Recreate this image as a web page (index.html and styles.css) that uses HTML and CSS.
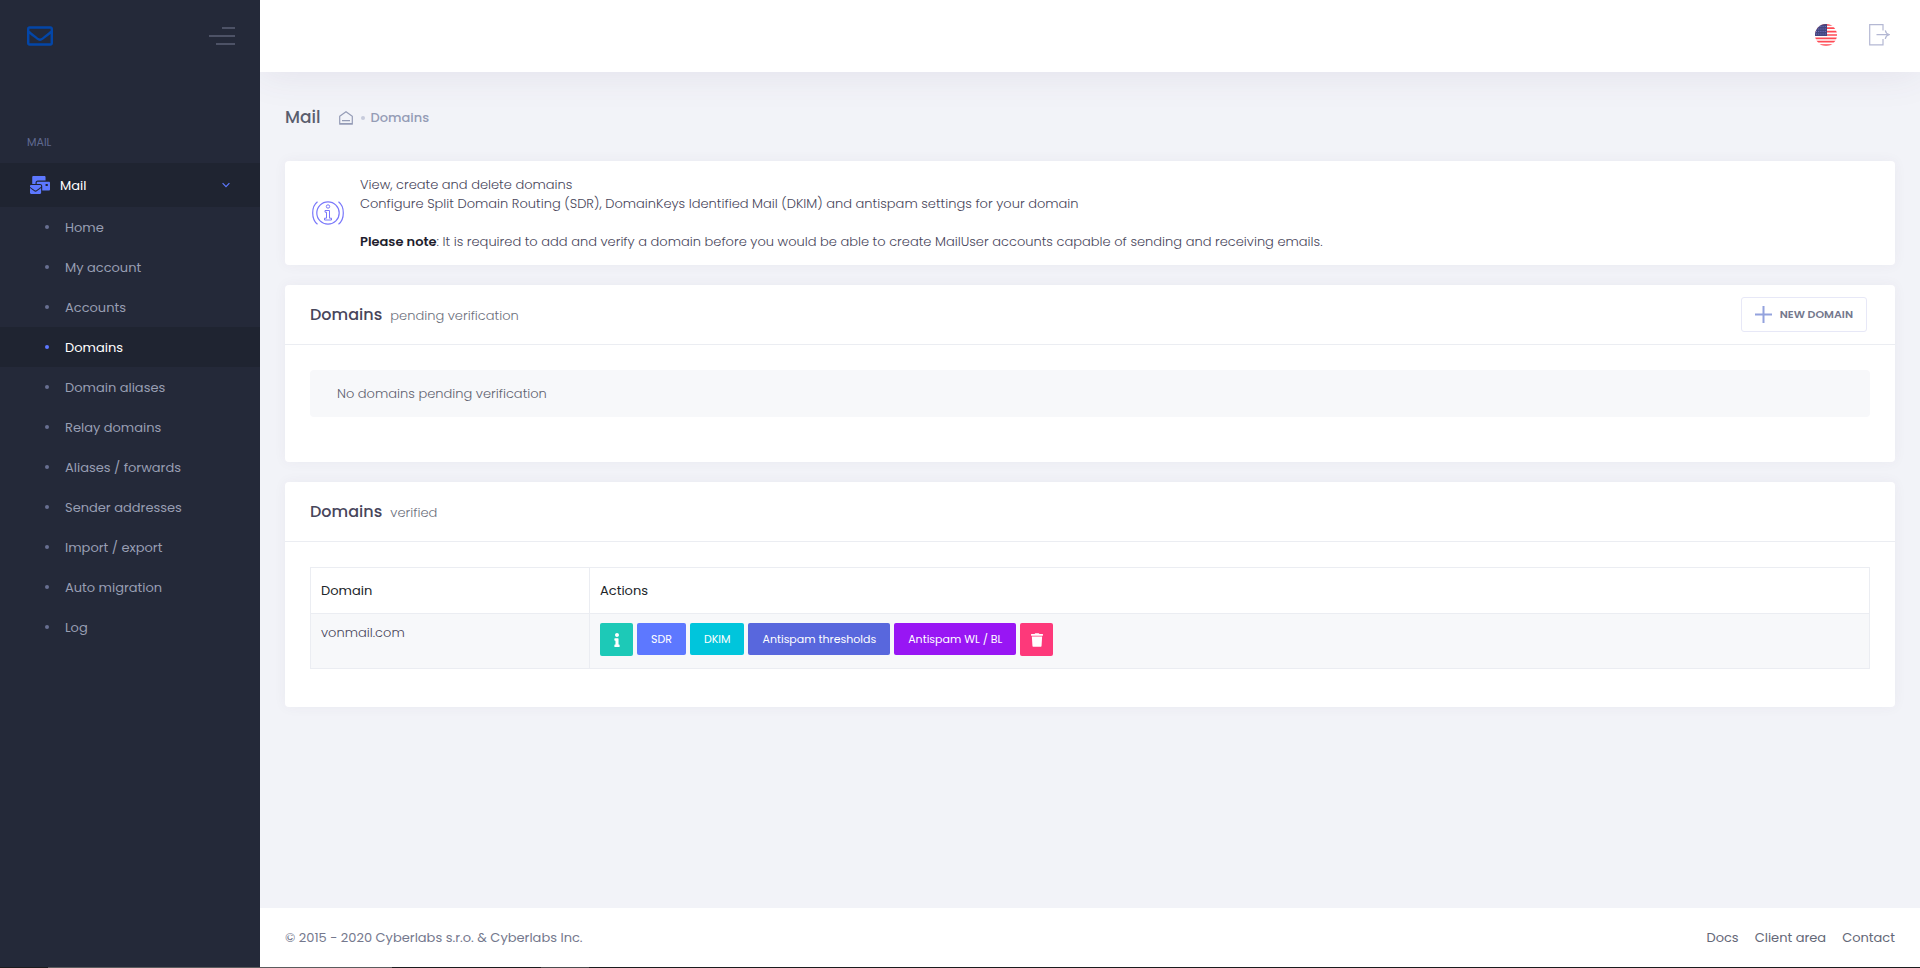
FILE: index.html
```html
<!DOCTYPE html>
<html lang="en">
<head>
<meta charset="utf-8">
<title>Mail - Domains</title>
<link rel="stylesheet" href="styles.css">
</head>
<body>
<div class="app">
  <aside class="sidebar">
    <div class="brand">
      <a href="#" class="brand-logo" aria-label="Mail">
        <svg viewBox="0 64 512 384" width="26" height="20" fill="currentColor"><path d="M464 64H48C21.49 64 0 85.49 0 112v288c0 26.51 21.49 48 48 48h416c26.51 0 48-21.49 48-48V112c0-26.51-21.49-48-48-48zm0 48v40.805c-22.422 18.259-58.168 46.651-134.587 106.49-16.841 13.247-50.201 45.072-73.413 44.701-23.208.375-56.579-31.459-73.413-44.701C106.18 199.465 70.425 171.067 48 152.805V112h416zM48 400V214.398c22.914 18.251 55.409 43.862 104.938 82.646 21.857 17.205 60.134 55.186 103.062 54.955 42.717.231 80.509-37.199 103.053-54.947 49.528-38.783 82.032-64.401 104.947-82.653V400H48z"/></svg>
      </a>
      <button type="button" class="toggle" aria-label="Toggle menu"><span class="bar bar-short"></span><span class="bar"></span><span class="bar bar-mid"></span></button>
    </div>
    <nav class="menu">
      <h2 class="menu-section">MAIL</h2>
      <a href="#" class="menu-parent">
        <svg class="menu-icon" viewBox="0 0 576 512" width="20" height="18" fill="currentColor"><path d="M160 448c-25.6 0-51.2-22.4-64-32-64-44.8-83.2-60.8-96-70.4V480c0 17.67 14.33 32 32 32h256c17.67 0 32-14.33 32-32V345.6c-12.8 9.6-32 25.6-96 70.4-12.8 9.6-38.4 32-64 32zm128-192H32c-17.67 0-32 14.33-32 32v16c25.6 19.2 22.4 19.2 115.2 86.4 9.6 6.4 28.8 25.6 44.8 25.6s35.2-19.2 44.8-22.4c92.8-67.2 89.6-67.2 115.2-86.4V288c0-17.67-14.33-32-32-32zm256-96H224c-17.67 0-32 14.33-32 32v32h96c33.21 0 60.59 25.42 63.71 57.82l.29-.22V416h192c17.67 0 32-14.33 32-32V192c0-17.67-14.33-32-32-32zm-32 128h-64v-64h64v64zm-352-96c0-35.29 28.71-64 64-64h224V32c0-17.67-14.33-32-32-32H96C78.33 0 64 14.33 64 32v192h96v-32z"/></svg>
        <span class="menu-title">Mail</span>
        <svg class="menu-arrow" viewBox="0 0 8 6" width="8" height="6" fill="none" stroke="currentColor" stroke-width="1.2"><path d="M.6 1.2 4 4.6 7.4 1.2"/></svg>
      </a>
      <ul class="submenu">
        <li><a href="#">Home</a></li>
        <li><a href="#">My account</a></li>
        <li><a href="#">Accounts</a></li>
        <li><a href="#" class="active" aria-current="page">Domains</a></li>
        <li><a href="#">Domain aliases</a></li>
        <li><a href="#">Relay domains</a></li>
        <li><a href="#">Aliases / forwards</a></li>
        <li><a href="#">Sender addresses</a></li>
        <li><a href="#">Import / export</a></li>
        <li><a href="#">Auto migration</a></li>
        <li><a href="#">Log</a></li>
      </ul>
    </nav>
  </aside>

  <div class="page">
    <header class="topbar">
      <button type="button" class="icon-button" aria-label="Language">
        <svg viewBox="0 0 22 22" width="22" height="22">
          <defs><clipPath id="round"><circle cx="11" cy="11" r="11"/></clipPath></defs>
          <g clip-path="url(#round)">
            <rect width="22" height="22" fill="#fff"/>
            <path d="M0 .9h22M0 4.2h22M0 7.6h22M0 11h22M0 14.3h22M0 17.7h22M0 21h22" stroke="#ff4b55" stroke-width="1.7"/>
            <rect width="12" height="12" fill="#46467f"/>
            <path d="M1 2.5h11M1 5h11M1 7.500h11M1 10h11" stroke="#7274c0" stroke-width="1" stroke-dasharray="1 1.200"/>
          </g>
        </svg>
      </button>
      <a href="#" class="icon-button" aria-label="Log out">
        <svg viewBox="0 0 21 22" width="21" height="22" fill="none" stroke="#b4b8d3" stroke-width="1.200"><path d="M14 6.500V.7H.7v20.100H14V15M7.500 10.700h12.600M16.300 6.400c.4 2.300 1.600 3.700 3.800 4.300-2.200.6-3.400 2-3.800 4.300"/></svg>
      </a>
    </header>

    <main class="content">
      <div class="subheader">
        <h1 class="page-title">Mail</h1>
        <nav class="crumbs" aria-label="Breadcrumb">
          <a href="#" aria-label="Home"><svg viewBox="0 0 14 14" width="14" height="14" fill="none" stroke="currentColor" stroke-width="1.200"><path d="M.7 5.200 7 .8l6.300 4.400v7.300H.7zM3 9.700h8M.2 13.100h13.600"/></svg></a>
          <span class="crumb-dot"></span>
          <a href="#">Domains</a>
        </nav>
      </div>

      <section class="card notice">
        <svg class="notice-icon" viewBox="0 0 32 24" width="32" height="24" fill="none" stroke="#7a78fa" stroke-width="1.200">
          <circle cx="16" cy="12" r="11.200"/>
          <circle cx="16" cy="5.500" r="1.700" stroke-width="1"/>
          <path d="M13 9.500h4.500v7.700h2V19h-7v-1.800h2v-6H13z" stroke-width="1"/>
          <path d="M5.500.8C-.9 5.500-.9 18.500 5.500 23.200M26.500.8c6.400 4.700 6.400 17.700 0 22.400"/>
        </svg>
        <p class="notice-text">View, create and delete domains<br>Configure Split Domain Routing (SDR), DomainKeys Identified Mail (DKIM) and antispam settings for your domain<br><br><strong>Please note</strong>: It is required to add and verify a domain before you would be able to create MailUser accounts capable of sending and receiving emails.</p>
      </section>

      <section class="card">
        <div class="card-head">
          <h2 class="card-title">Domains <small>pending verification</small></h2>
          <button type="button" class="new-button">
            <svg viewBox="0 0 17 17" width="17" height="17" stroke="#93a2dd" stroke-width="2"><path d="M8.500 0v17M0 8.500h17"/></svg>
            NEW DOMAIN
          </button>
        </div>
        <div class="card-body">
          <p class="alert">No domains pending verification</p>
        </div>
      </section>

      <section class="card">
        <div class="card-head">
          <h2 class="card-title">Domains <small>verified</small></h2>
        </div>
        <div class="card-body">
          <table class="domains">
            <thead><tr><th scope="col" class="col-domain">Domain</th><th scope="col">Actions</th></tr></thead>
            <tbody>
              <tr>
                <td>vonmail.com</td>
                <td>
                  <div class="actions">
                    <button type="button" class="btn btn-icon teal" aria-label="Info"><svg viewBox="0 0 192 512" width="6" height="14" fill="currentColor"><path d="M20 424.229h20V279.771H20c-11.046 0-20-8.954-20-20V212c0-11.046 8.954-20 20-20h112c11.046 0 20 8.954 20 20v212.229h20c11.046 0 20 8.954 20 20V492c0 11.046-8.954 20-20 20H20c-11.046 0-20-8.954-20-20v-47.771c0-11.046 8.954-20 20-20zM96 0C56.235 0 24 32.235 24 72s32.235 72 72 72 72-32.235 72-72S135.764 0 96 0z"/></svg></button>
                    <button type="button" class="btn blue">SDR</button>
                    <button type="button" class="btn cyan">DKIM</button>
                    <button type="button" class="btn indigo">Antispam thresholds</button>
                    <button type="button" class="btn purple">Antispam WL / BL</button>
                    <button type="button" class="btn btn-icon pink" aria-label="Delete"><svg viewBox="0 0 448 512" width="12" height="14" fill="currentColor"><path d="M432 32H312l-9.400-18.700A24 24 0 0 0 281.100 0H166.800a23.720 23.720 0 0 0-21.400 13.300L136 32H16A16 16 0 0 0 0 48v32a16 16 0 0 0 16 16h416a16 16 0 0 0 16-16V48a16 16 0 0 0-16-16zM53.200 467a48 48 0 0 0 47.900 45h245.800a48 48 0 0 0 47.900-45L416 128H32z"/></svg></button>
                  </div>
                </td>
              </tr>
            </tbody>
          </table>
        </div>
      </section>
    </main>

    <footer class="footer">
      <span>© 2015 - 2020 Cyberlabs s.r.o. &amp; Cyberlabs Inc.</span>
      <nav class="footer-links"><a href="#">Docs</a><a href="#">Client area</a><a href="#">Contact</a></nav>
    </footer>
  </div>
</div>
<div class="edge"></div>
</body>
</html>
```
FILE: styles.css
```css
* { box-sizing: border-box; }

body {
  margin: 0;
  min-height: 100vh;
  display: flex;
  flex-direction: column;
  background: #f2f3f8;
  color: #646c9a;
  font: 300 13px/19px Poppins, Inter, sans-serif;
}

a { color: inherit; text-decoration: none; }
h1, h2, p, ul { margin: 0; padding: 0; }
button { font: inherit; border: 0; cursor: pointer; }
svg { display: block; flex: none; }

.app { flex: 1; display: flex; }

.edge {
  height: 1px;
  background: linear-gradient(90deg, #1c1c1e 48px, #5c5c5e 48px 392px, #1c1c1e 392px 541px, #4c4c4e 541px 589px, #1c1c1e 589px);
}

/* Sidebar */
.sidebar { flex: 0 0 260px; position: relative; z-index: 1; background: #242939; }

.brand {
  height: 72px;
  padding: 0 25px 0 27px;
  display: flex;
  align-items: center;
  justify-content: space-between;
}
.brand-logo { color: #0346a8; }

.toggle {
  width: 26px;
  padding: 0;
  background: none;
  display: flex;
  flex-direction: column;
  align-items: flex-end;
  gap: 6px;
}
.bar { width: 26px; height: 2px; background: #4d5266; }
.bar-short { width: 13px; }
.bar-mid { width: 19px; }

.menu { padding-top: 50px; }
.menu-section {
  height: 41px;
  padding: 0 27px;
  color: #606a91;
  font-size: 11px;
  line-height: 40px;
  font-weight: 400;
}
.menu-parent {
  height: 44px;
  padding: 0 30px;
  display: flex;
  align-items: center;
  background: #1f2431;
  color: #5d78ff;
}
.menu-title { flex: 1; margin-left: 10px; color: #fff; font-weight: 400; }

.submenu { list-style: none; }
.submenu a {
  height: 40px;
  padding-left: 45px;
  display: flex;
  align-items: center;
  gap: 16px;
  color: #989eb3;
  font-weight: 400;
}
.submenu a::before {
  content: "";
  width: 4px;
  height: 4px;
  border-radius: 50%;
  background: #686f92;
}
.submenu .active { background: #1f2431; color: #fff; }
.submenu .active::before { background: #5d78ff; }

/* Page frame */
.page { flex: 1; min-width: 0; display: flex; flex-direction: column; }

.topbar {
  height: 72px;
  padding: 0 30px 2px;
  display: flex;
  align-items: center;
  justify-content: flex-end;
  gap: 32px;
  background: #fff;
  box-shadow: 0 0 40px rgba(82, 63, 105, .1);
}
.icon-button { padding: 0; background: none; }

.content {
  flex: 1;
  padding: 0 25px 25px;
  display: flex;
  flex-direction: column;
  gap: 20px;
}

.subheader { height: 69px; padding-top: 22px; display: flex; align-items: center; }
.page-title { font-size: 17px; font-weight: 500; color: #595d6e; }
.crumbs {
  margin-left: 18px;
  display: flex;
  align-items: center;
  gap: 6px;
  color: #959cb6;
  font-weight: 500;
}
.crumb-dot { width: 4px; height: 4px; margin-left: 2px; border-radius: 50%; background: #c7cbdc; }

/* Cards */
.card {
  background: #fff;
  border-radius: 4px;
  box-shadow: 0 0 13px rgba(82, 63, 105, .05);
}

.notice { padding: 14px 27px; display: flex; align-items: center; gap: 16px; color: #48465b; }
.notice-text { flex: 1; }
.notice strong { color: #1f1e2e; font-weight: 600; }

.card-head {
  height: 60px;
  padding: 0 28px 0 25px;
  display: flex;
  align-items: center;
  justify-content: space-between;
  border-bottom: 1px solid #ebedf2;
}
.card-title { font-size: 16px; font-weight: 500; color: #48465b; }
.card-title small { margin-left: 4px; font-size: 13px; font-weight: 300; color: #6c6f7c; }

.new-button {
  height: 35px;
  padding: 0 13px;
  display: flex;
  align-items: center;
  gap: 8px;
  background: #fff;
  border: 1px solid #e7e8f7;
  border-radius: 3px;
  color: #74788d;
  font-size: 11px;
  font-weight: 600;
}

.card-body { padding: 25px 25px 37px; }
.alert {
  margin-bottom: 8px;
  padding: 14px 27px;
  border-radius: 4px;
  background: #f7f8fa;
  color: #5f6270;
}

.domains { width: 100%; margin-bottom: 1px; border-collapse: collapse; color: #48465b; }
.domains th, .domains td {
  border: 1px solid #ebedf2;
  padding: 9px 10px 10px;
  text-align: left;
  vertical-align: top;
}
.domains th { padding: 13px 10px; font-weight: 400; color: #212529; }
.domains td { background: #f7f8fa; }
.domains .col-domain { width: 279px; }

.actions { display: flex; gap: 4px; padding-bottom: 2px; align-items: flex-start; }
.btn {
  height: 32px;
  padding: 0 14px;
  border-radius: 2px;
  color: #fff;
  font-size: 11px;
  font-weight: 400;
}
.btn-icon { width: 33px; height: 33px; padding: 0; display: grid; place-items: center; }
.teal { background: #1dc9b7; }
.blue { background: #5d78ff; }
.cyan { background: #00c5dc; }
.indigo { background: #5867dd; }
.purple { background: #9816f4; }
.pink { background: #fd397a; }

.footer {
  height: 59px;
  padding: 0 25px;
  display: flex;
  align-items: center;
  justify-content: space-between;
  background: #fff;
  color: #74788d;
  font-weight: 400;
}
.footer-links { display: flex; gap: 16px; color: #646777; }
```
